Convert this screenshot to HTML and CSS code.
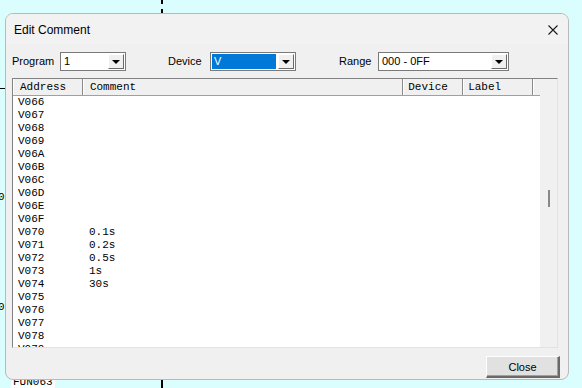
FILE: index.html
```html
<!DOCTYPE html>
<html lang="en">
<head>
  <meta charset="UTF-8">
  <title>Edit Comment</title>
  <link rel="stylesheet" href="styles.css">
</head>
<body>

  <div class="desktop">
    <div class="bg-dash"></div>
    <div class="bg-wire"></div>
    <div class="bg-tick"></div>
    <div class="bg-cut cut-1">0</div>
    <div class="bg-cut cut-2">0</div>
    <div class="bg-label">FUN063</div>

    <div class="window">
      <div class="titlebar">
        <span class="title">Edit Comment</span>
        <svg class="close-x" width="10" height="10" viewBox="0 0 10 10">
          <path d="M0.5 0.5 L9.5 9.5 M9.5 0.5 L0.5 9.5" stroke="#1a1a1a" stroke-width="1.1" fill="none"/>
        </svg>
      </div>

      <div class="toolbar">
        <span class="lbl lbl-program">Program</span>
        <div class="combo combo-program">
          <span class="combo-text">1</span>
          <span class="combo-btn"><i class="arrow"></i></span>
        </div>

        <span class="lbl lbl-device">Device</span>
        <div class="combo combo-device">
          <span class="combo-text selected">V</span>
          <span class="combo-btn"><i class="arrow"></i></span>
        </div>

        <span class="lbl lbl-range">Range</span>
        <div class="combo combo-range">
          <span class="combo-text">000 - 0FF</span>
          <span class="combo-btn"><i class="arrow"></i></span>
        </div>
      </div>

      <div class="listview">
        <div class="list-main">
          <div class="list-head">
            <div class="hcell col-addr">Address</div>
            <div class="hcell col-comment">Comment</div>
            <div class="hcell col-device">Device</div>
            <div class="hcell col-label">Label</div>
            <div class="hcell col-fill"></div>
          </div>
          <div class="list-rows" id="rows"></div>
        </div>
        <div class="scrollbar"><div class="thumb"></div></div>
      </div>

      <div class="footer">
        <button class="btn">Close</button>
      </div>
    </div>
  </div>

  <script>
    const rows = [
      ['V066', ''], ['V067', ''], ['V068', ''], ['V069', ''], ['V06A', ''],
      ['V06B', ''], ['V06C', ''], ['V06D', ''], ['V06E', ''], ['V06F', ''],
      ['V070', '0.1s'], ['V071', '0.2s'], ['V072', '0.5s'], ['V073', '1s'],
      ['V074', '30s'], ['V075', ''], ['V076', ''], ['V077', ''], ['V078', ''],
      ['V079', '']
    ];

    const lista = document.getElementById('rows');
    rows.forEach(r => {
      const div = document.createElement('div');
      div.className = 'row';
      div.innerHTML = `<span class="col-addr">${r[0]}</span><span class="col-comment">${r[1]}</span>`;
      lista.appendChild(div);
    });
  </script>

</body>
</html>
```

FILE: styles.css
```css
* {
  margin: 0;
  padding: 0;
  box-sizing: border-box;
}

body {
  font-family: 'Liberation Sans', Arial, sans-serif;
  font-size: 12px;
  color: #000;
  background-color: #dafdfd;
  width: 582px;
  height: 388px;
  overflow: hidden;
}

.desktop {
  position: relative;
  width: 582px;
  height: 388px;
}

/* things on the editor behind the dialog */
.bg-dash {
  position: absolute;
  left: 161px;
  top: 0;
  width: 2px;
  height: 14px;
  background: repeating-linear-gradient(to bottom, #000 0 4px, transparent 4px 9px);
}

.bg-wire {
  position: absolute;
  left: 161px;
  top: 378px;
  width: 2px;
  height: 10px;
  background: #000;
}

.bg-tick {
  position: absolute;
  left: 0;
  top: 88px;
  width: 6px;
  height: 1px;
  background: #000;
}

.bg-cut {
  position: absolute;
  left: -2px;
  font-family: 'Liberation Mono', monospace;
  font-size: 11px;
}

.cut-1 { top: 191px; }
.cut-2 { top: 301px; }

.bg-label {
  position: absolute;
  left: 11px;
  top: 376px;
  padding: 0 2px;
  background: #fff;
  font-family: 'Liberation Mono', monospace;
  font-size: 11px;
  line-height: 13px;
}

/* dialog */
.window {
  position: absolute;
  left: 5px;
  top: 13px;
  width: 564px;
  height: 367px;
  background-color: #f0f0f0;
  border: 1px solid #b9b9b9;
  border-radius: 8px;
  display: flex;
  flex-direction: column;
  overflow: hidden;
}

.titlebar {
  height: 30px;
  display: flex;
  align-items: center;
  justify-content: space-between;
  padding: 0 10px 0 8px;
  background-color: #f2f2f2;
}

.title {
  font-size: 12px;
  padding-top: 1px;
}

.close-x {
  margin-top: 1px;
}

.toolbar {
  height: 34px;
  display: flex;
  align-items: flex-start;
  padding: 8px 0 0 6px;
}

.lbl {
  font-size: 11px;
  line-height: 19px;
}

.lbl-program { width: 48px; }
.lbl-device { width: 42px; margin-left: 42px; }
.lbl-range { width: 39px; margin-left: 43px; }

.combo {
  height: 19px;
  border: 1px solid #7a7a7a;
  background: #fff;
  display: flex;
  padding: 1px;
}

.combo-program { width: 66px; }
.combo-device { width: 86px; }
.combo-range { width: 131px; }

.combo-text {
  flex: 1;
  font-size: 11px;
  line-height: 15px;
  padding-left: 2px;
}

.combo-text.selected {
  background-color: #0078d7;
  color: #fff;
  margin-right: 2px;
}

.combo-btn {
  width: 16px;
  background: #f0f0f0;
  border-top: 1px solid #fff;
  border-left: 1px solid #fff;
  border-right: 1px solid #696969;
  border-bottom: 1px solid #696969;
  display: flex;
  align-items: center;
  justify-content: center;
}

.arrow {
  width: 0;
  height: 0;
  border-left: 4px solid transparent;
  border-right: 4px solid transparent;
  border-top: 4px solid #000;
}

/* list */
.listview {
  margin-left: 6px;
  width: 546px;
  height: 270px;
  background: #fff;
  border-top: 1px solid #828282;
  border-left: 1px solid #828282;
  border-right: 1px solid #e3e3e3;
  border-bottom: 1px solid #e3e3e3;
  display: flex;
}

.list-main {
  flex: 1;
  overflow: hidden;
  font-family: 'Liberation Mono', monospace;
  font-size: 11px;
}

.list-head {
  display: flex;
  height: 17px;
  background: #f0f0f0;
  border-bottom: 1px solid #a0a0a0;
}

.hcell {
  line-height: 16px;
  padding-left: 6px;
  border-left: 1px solid #fff;
  border-right: 1px solid #8a8a8a;
  white-space: nowrap;
}

.col-addr { width: 70px; }
.col-comment { width: 321px; }
.col-device { width: 60px; padding-left: 4px; }
.col-label { width: 70px; padding-left: 4px; }
.col-fill { flex: 1; border-right: none; }

.row {
  display: flex;
  height: 13px;
  line-height: 13px;
}

.row .col-addr {
  padding-left: 5px;
}

.row .col-comment {
  padding-left: 6px;
}

.scrollbar {
  width: 17px;
  background: #f0f0f0;
  display: flex;
  justify-content: center;
}

.thumb {
  width: 2px;
  height: 17px;
  margin-top: 111px;
  background: #888;
}

.footer {
  flex: 1;
  display: flex;
  justify-content: flex-end;
  padding: 8px 8px 0 0;
}

.btn {
  width: 74px;
  height: 22px;
  font-family: 'Liberation Sans', Arial, sans-serif;
  font-size: 11px;
  background: #e1e1e1;
  border-top: 1px solid #fff;
  border-left: 1px solid #fff;
  border-right: 2px solid #696969;
  border-bottom: 2px solid #696969;
  box-shadow: inset -1px -1px 0 #a0a0a0;
}
```
